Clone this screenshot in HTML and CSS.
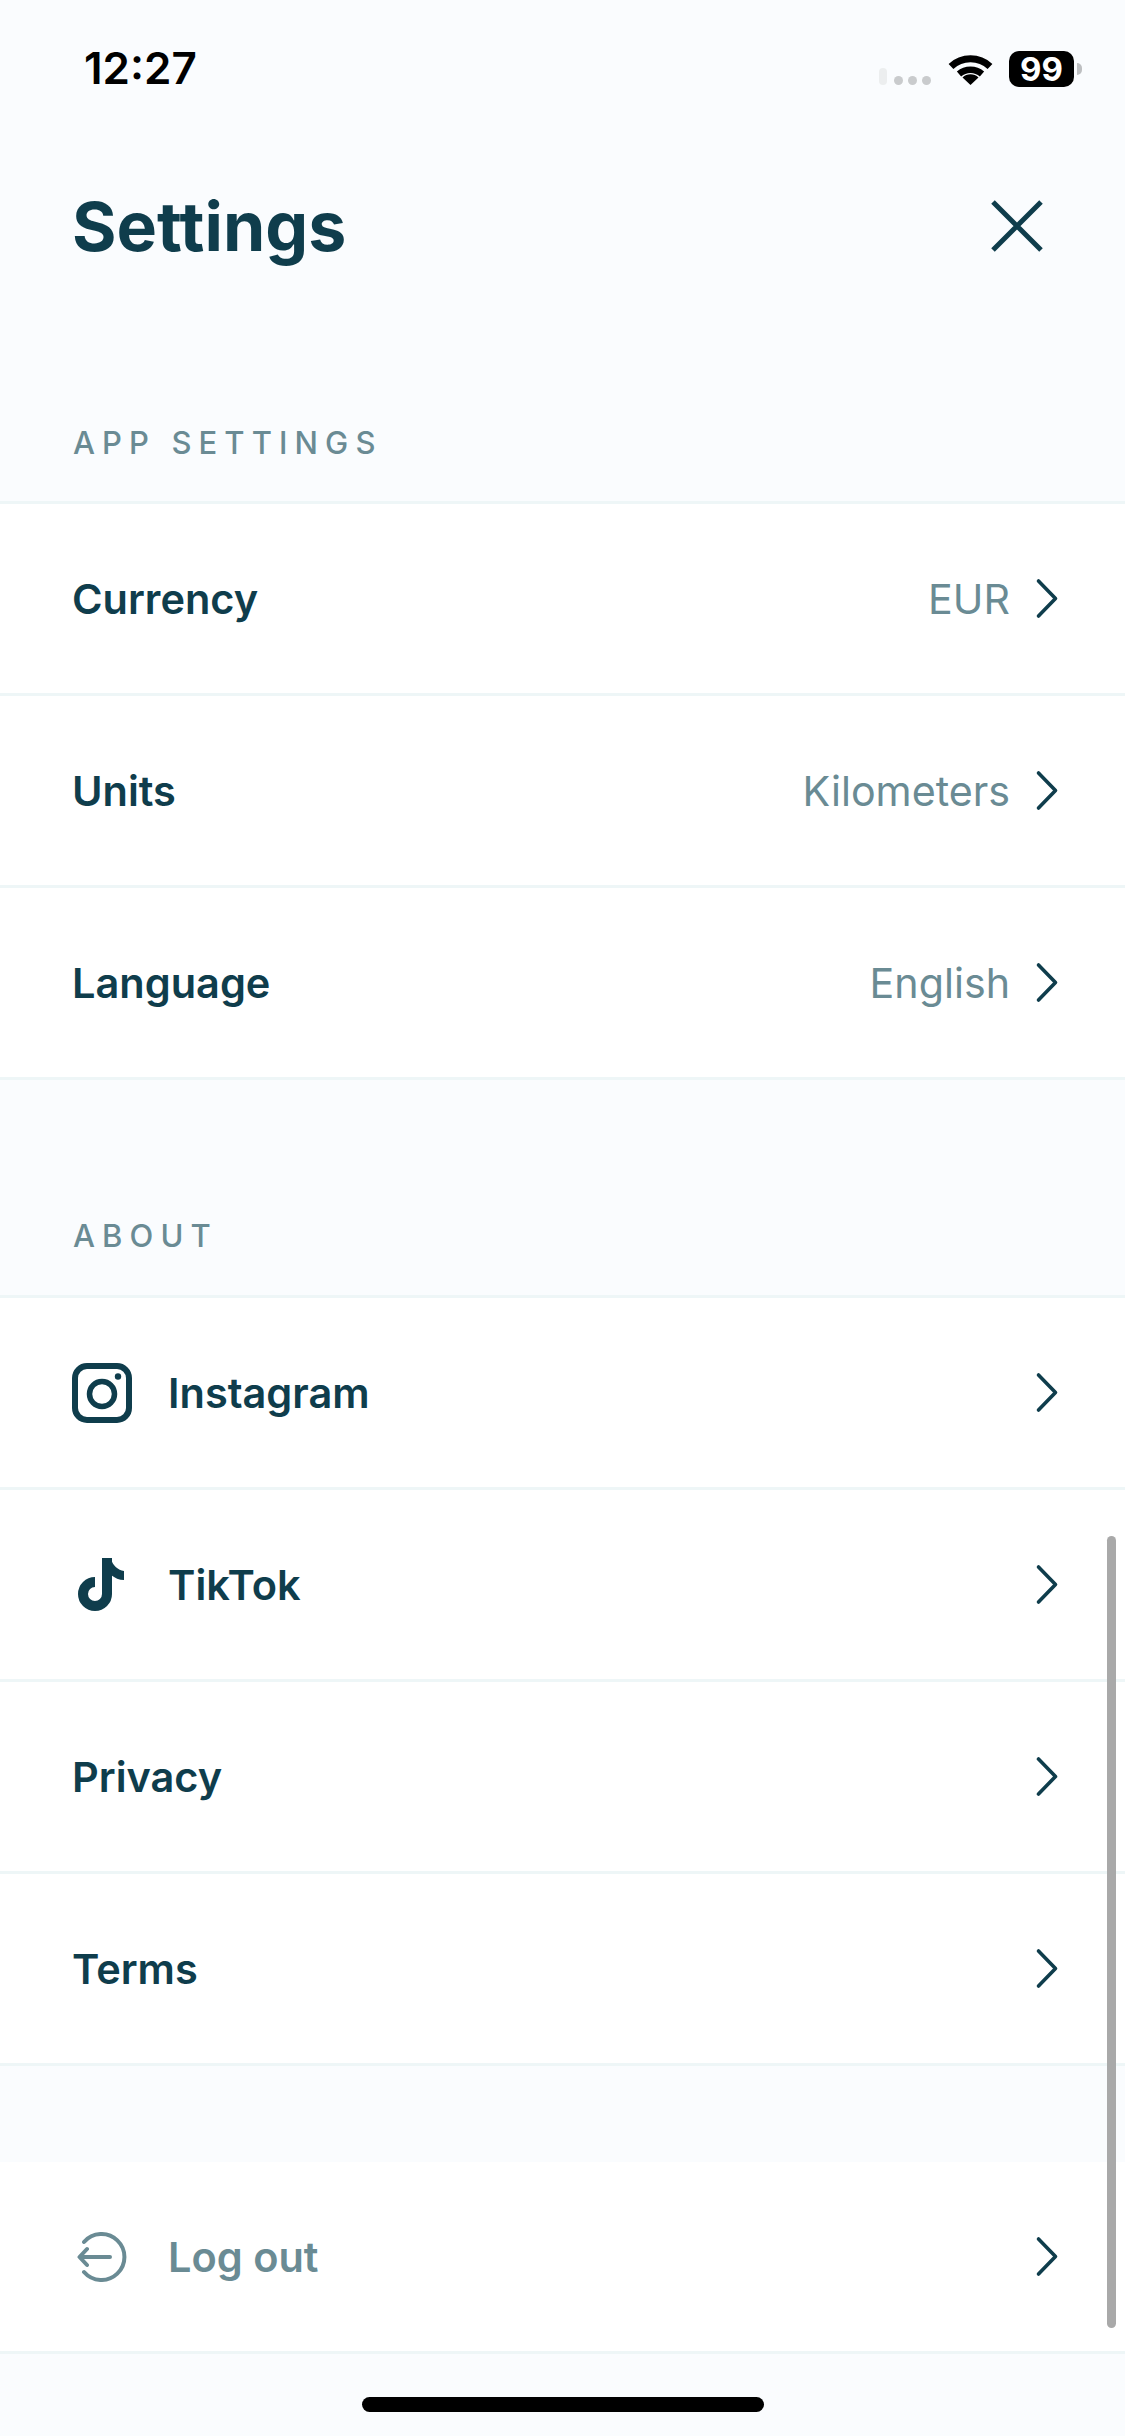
FILE: index.html
```html
<!DOCTYPE html>
<html>

<head>
    <title>Settings</title>
    <link rel="stylesheet" href="styles.css">
</head>

<body>
    <svg class="sprite" width="0" height="0">
        <symbol id="chevron" viewBox="0 0 24 43">
            <path d="M3.5 4 L20.5 21.5 L3.5 39" fill="none" stroke="currentColor" stroke-width="3.6" stroke-linecap="round" stroke-linejoin="round" />
        </symbol>
    </svg>

    <div class="screen">
        <div class="status-bar">
            <span class="time">12:27</span>
            <div class="status-icons">
                <div class="signal">
                    <span class="signal-pill"></span>
                    <span class="signal-dot"></span>
                    <span class="signal-dot"></span>
                    <span class="signal-dot"></span>
                </div>
                <svg class="wifi" viewBox="0 0 45 33">
                    <path d="M3 14.5 A28.5 28.5 0 0 1 42 14.5" fill="none" stroke="#000" stroke-width="7" />
                    <path d="M11 22 A17.5 17.5 0 0 1 34 22" fill="none" stroke="#000" stroke-width="6.5" />
                    <path d="M22.5 33 L14.5 25.5 A11.5 11.5 0 0 1 30.5 25.5 Z" />
                </svg>
                <div class="battery">99</div>
                <span class="battery-nub"></span>
            </div>
        </div>

        <div class="header">
            <h1 class="title">Settings</h1>
            <svg class="close" viewBox="0 0 52 52">
                <path d="M2 2 L50 50 M50 2 L2 50" fill="none" stroke="#0f3d4c" stroke-width="5" />
            </svg>
        </div>

        <div class="section-label label-app">APP SETTINGS</div>
        <div class="list">
            <div class="row">
                <span class="row-name">Currency</span>
                <span class="row-value">EUR</span>
                <svg class="chevron"><use href="#chevron" /></svg>
            </div>
            <div class="row">
                <span class="row-name">Units</span>
                <span class="row-value">Kilometers</span>
                <svg class="chevron"><use href="#chevron" /></svg>
            </div>
            <div class="row">
                <span class="row-name">Language</span>
                <span class="row-value">English</span>
                <svg class="chevron"><use href="#chevron" /></svg>
            </div>
        </div>

        <div class="section-label label-about">ABOUT</div>
        <div class="list">
            <div class="row">
                <div class="row-icon">
                    <svg class="icon-instagram" viewBox="0 0 60 60">
                        <rect x="3" y="3" width="54" height="54" rx="12" fill="none" stroke="#0f3d4c" stroke-width="6" />
                        <circle cx="30" cy="31" r="12.5" fill="none" stroke="#0f3d4c" stroke-width="5.5" />
                        <circle cx="46" cy="13.5" r="3.2" fill="#0f3d4c" />
                    </svg>
                </div>
                <span class="row-name">Instagram</span>
                <svg class="chevron"><use href="#chevron" /></svg>
            </div>
            <div class="row">
                <div class="row-icon">
                    <svg class="icon-tiktok" viewBox="0 0 46 54">
                        <path d="M29 0 V36 A12 12 0 1 1 17 24" fill="none" stroke="#0f3d4c" stroke-width="10" />
                        <path d="M33 1 C35 8 40 12 46 13 V22 C41 22 37 20 33 17 Z" fill="#0f3d4c" />
                    </svg>
                </div>
                <span class="row-name">TikTok</span>
                <svg class="chevron"><use href="#chevron" /></svg>
            </div>
            <div class="row">
                <span class="row-name">Privacy</span>
                <svg class="chevron"><use href="#chevron" /></svg>
            </div>
            <div class="row">
                <span class="row-name">Terms</span>
                <svg class="chevron"><use href="#chevron" /></svg>
            </div>
        </div>

        <div class="list list-footer">
            <div class="row">
                <div class="row-icon">
                    <svg class="icon-logout" viewBox="0 0 50 50">
                        <path d="M7 10 A23 23 0 1 1 7 40" fill="none" stroke="#6a8b94" stroke-width="4" stroke-linecap="round" />
                        <path d="M3 25 H33 M10 17 L2.5 25 L10 33" fill="none" stroke="#6a8b94" stroke-width="4" stroke-linecap="round" stroke-linejoin="round" />
                    </svg>
                </div>
                <span class="row-name row-name-muted">Log out</span>
                <svg class="chevron"><use href="#chevron" /></svg>
            </div>
        </div>

        <div class="scrollbar"></div>
        <div class="home-bar"></div>
    </div>
</body>

</html>
```

FILE: styles.css
```css
* {
    margin: 0;
    padding: 0;
    box-sizing: border-box;
    font-family: 'Inter', 'Noto Sans', sans-serif;
}

body {
    background: #fafcfe;
}

.sprite {
    display: block;
    position: absolute;
}

.screen {
    position: relative;
    width: 1125px;
    height: 2436px;
    overflow: hidden;
    background: #fafcfe;
    color: #0f3d4c;
    display: flex;
    flex-direction: column;
}

/* status bar */
.status-bar {
    height: 136px;
    padding: 48px 43px 0 84px;
    display: flex;
    justify-content: space-between;
    align-items: flex-start;
}

.time {
    font-size: 44px;
    line-height: 40px;
    font-weight: 600;
    color: #000;
}

.status-icons {
    display: flex;
    align-items: flex-start;
    padding-top: 3px;
}

.signal {
    display: flex;
    align-items: flex-end;
    gap: 5px;
    height: 37px;
    padding-bottom: 3px;
    margin-right: 17px;
}

.signal-pill {
    width: 8px;
    height: 17px;
    margin-right: 2px;
    border-radius: 4px;
    background: #eceeef;
}

.signal-dot {
    width: 9px;
    height: 9px;
    border-radius: 50%;
    background: #c9cbcd;
}

.wifi {
    width: 45px;
    height: 33px;
    margin: 1px 16px 0 0;
}

.battery {
    width: 65px;
    height: 36px;
    border-radius: 10px;
    background: #000;
    color: #fff;
    font-size: 33px;
    font-weight: 700;
    line-height: 36px;
    text-align: center;
}

.battery-nub {
    width: 5px;
    height: 12px;
    margin: 12px 0 0 3px;
    border-radius: 0 6px 6px 0;
    background: #bdbfc1;
}

/* header */
.header {
    height: 180px;
    padding: 0 82px 0 72px;
    display: flex;
    justify-content: space-between;
    align-items: center;
}

.title {
    font-size: 68px;
    font-weight: 700;
}

.close {
    width: 52px;
    height: 52px;
}

/* lists */
.section-label {
    display: flex;
    align-items: flex-end;
    padding-left: 73px;
    color: #6a8b94;
    font-size: 31px;
    font-weight: 500;
    line-height: 36px;
    letter-spacing: 7.1px;
}

.label-app {
    height: 187px;
    padding-bottom: 40px;
    margin-top: -2px;
}

.label-about {
    height: 215px;
    padding-bottom: 41px;
}

.list {
    background: #fff;
    border-top: 3px solid #eef6f7;
}

.row {
    height: 192px;
    padding: 0 66px 0 72px;
    display: flex;
    align-items: center;
    border-bottom: 3px solid #eef6f7;
}

.row-icon {
    width: 96px;
    display: flex;
    align-items: center;
}

.row-name {
    flex: 1;
    font-size: 41.5px;
    font-weight: 600;
}

.row-name-muted {
    color: #6a8b94;
}

.row-value {
    margin-right: 25px;
    color: #6a8b94;
    font-size: 41.2px;
    font-weight: 400;
}

.chevron {
    width: 24px;
    height: 43px;
    color: #0f3d4c;
}

.icon-instagram {
    width: 60px;
    height: 60px;
}

.icon-tiktok {
    width: 46px;
    height: 54px;
    margin-left: 6px;
}

.icon-logout {
    width: 50px;
    height: 50px;
    margin-left: 5px;
}

.list-footer {
    margin-top: 96px;
    border-top: none;
}

/* overlays */
.scrollbar {
    position: absolute;
    top: 1536px;
    right: 9px;
    width: 9px;
    height: 792px;
    border-radius: 5px;
    background: #a9a9a9;
}

.home-bar {
    position: absolute;
    top: 2397px;
    left: 362px;
    width: 402px;
    height: 15px;
    border-radius: 8px;
    background: #000;
}
```
